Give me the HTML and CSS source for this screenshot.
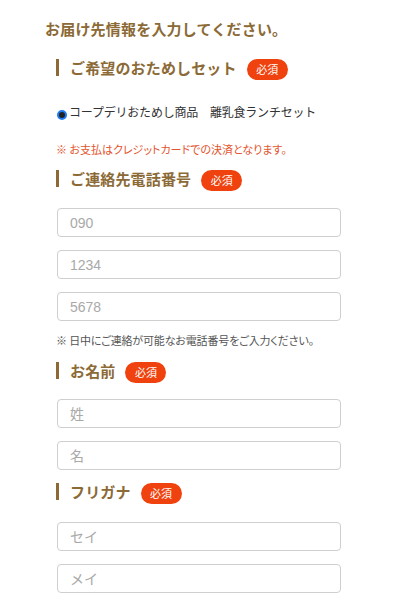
FILE: index.html
```html
<!DOCTYPE html>
<html lang="ja">
<head>
<meta charset="utf-8">
<link rel="stylesheet" href="styles.css">
</head>
<body>
<div class="page">
  <h1 class="title">お届け先情報を入力してください。</h1>

  <div class="heading h-set">
    <span class="label">ご希望のおためしセット</span>
    <span class="badge">必須</span>
  </div>
  <div class="radio-row">
    <span class="radio"></span>
    <span class="radio-text">コープデリおためし商品　離乳食ランチセット</span>
  </div>
  <p class="note note-red">※ お支払はクレジットカードでの決済となります。</p>

  <div class="heading h-tel">
    <span class="label">ご連絡先電話番号</span>
    <span class="badge">必須</span>
  </div>
  <div class="inputs i-tel">
    <input class="field" type="text" placeholder="090">
    <input class="field" type="text" placeholder="1234">
    <input class="field" type="text" placeholder="5678">
  </div>
  <p class="note note-gray">※ 日中にご連絡が可能なお電話番号をご入力ください。</p>

  <div class="heading h-name">
    <span class="label">お名前</span>
    <span class="badge">必須</span>
  </div>
  <div class="inputs i-name">
    <input class="field" type="text" placeholder="姓">
    <input class="field" type="text" placeholder="名">
  </div>

  <div class="heading h-kana">
    <span class="label">フリガナ</span>
    <span class="badge">必須</span>
  </div>
  <div class="inputs i-kana">
    <input class="field" type="text" placeholder="セイ">
    <input class="field" type="text" placeholder="メイ">
  </div>
</div>
</body>
</html>
```
FILE: styles.css
```css
html, body {
  margin: 0;
  padding: 0;
  background: #ffffff;
}
body {
  font-family: "Noto Sans CJK JP", "Noto Sans", sans-serif;
  color: #333333;
}
.page {
  padding: 19px 0 0 56px;
  width: 285px;
}
.title {
  margin: 0 0 0 -11px;
  font-size: 15px;
  line-height: 20px;
  font-weight: bold;
  color: #8b6a36;
  white-space: nowrap;
  letter-spacing: 0.2px;
}
.heading {
  display: flex;
  align-items: flex-start;
  height: 21px;
}
.heading .label {
  border-left: 3px solid #8b6a36;
  padding-left: 11px;
  font-size: 15px;
  line-height: 17px;
  height: 17px;
  font-weight: bold;
  color: #8b6a36;
  white-space: nowrap;
  letter-spacing: 0.15px;
}
.badge {
  margin-left: 10px;
  width: 41px;
  height: 21px;
  border-radius: 11px;
  background: #f0420e;
  color: #ffffff;
  font-size: 11px;
  line-height: 21px;
  text-align: center;
}
.h-set { margin-top: 20px; }
.h-tel { margin-top: 14px; }
.h-name { margin-top: 15px; }
.h-kana { margin-top: 13px; }

.radio-row {
  margin-top: 23px;
  display: flex;
  align-items: flex-end;
  height: 18px;
}
.radio {
  width: 6px;
  height: 6px;
  border: 2px solid #1f7cf0;
  border-radius: 50%;
  background: #222222;
  margin: 0 2px 1px 1px;
  flex: none;
}
.radio-text {
  font-size: 12px;
  line-height: 18px;
  color: #333333;
  white-space: nowrap;
  letter-spacing: -0.2px;
}
.note {
  margin: 0;
  font-size: 11px;
  line-height: 14px;
  white-space: nowrap;
  font-feature-settings: "palt";
}
.note-red {
  margin-top: 21px;
  color: #e2552e;
}
.note-gray {
  margin-top: 12px;
  color: #555555;
  letter-spacing: -0.15px;
}
.inputs {
  display: flex;
  flex-direction: column;
  gap: 13px;
  padding-left: 1px;
}
.i-tel { margin-top: 17px; }
.i-name { margin-top: 16px; }
.i-kana { margin-top: 18px; }
.field {
  box-sizing: border-box;
  width: 284px;
  height: 29px;
  margin: 0;
  border: 1.5px solid #cfcfcf;
  border-radius: 4px;
  padding: 0 0 0 12px;
  font-family: "Liberation Sans", "Noto Sans CJK JP", sans-serif;
  font-size: 14px;
  color: #333333;
  background: #ffffff;
  outline: none;
}
.field::placeholder {
  color: #a9a9a9;
}
```
